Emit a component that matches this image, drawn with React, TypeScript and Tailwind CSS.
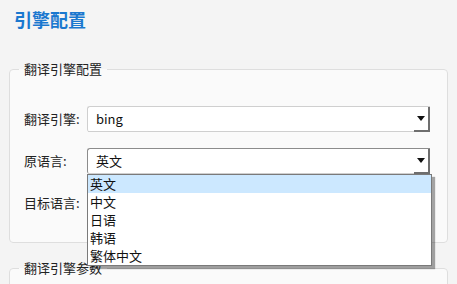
import React from "react";

const font = { fontFamily: '"Noto Sans CJK SC", "Noto Sans", sans-serif' };

function Arrow() {
  return (
    <svg width="8" height="5" viewBox="0 0 8 5">
      <polygon points="0,0 8,0 4,5" fill="#111" />
    </svg>
  );
}

function SelectBox({ value, focused }: { value: string; focused?: boolean }) {
  return (
    <div
      className={`flex h-[26px] w-[343px] items-stretch rounded-l-[3px] border-t border-l bg-white ${
        focused ? "border-[#8c8c8c]" : "border-[#cfcfcf]"
      }`}
    >
      <div className="flex flex-1 items-center border-b border-[#cfcfcf] pl-[8px] text-[13px] text-[#111]">
        {value}
      </div>
      <div className="flex w-[16px] items-center justify-center border-r-2 border-b-2 border-[#6e6e6e] pr-[1px]">
        <Arrow />
      </div>
    </div>
  );
}

export default function App() {
  const options = ["英文", "中文", "日语", "韩语", "繁体中文"];
  return (
    <div className="relative h-[284px] w-[457px] overflow-hidden bg-[#f4f4f4]" style={font}>
      <h1 className="pl-[14px] pt-[7px] text-[18px] font-bold leading-[24px] text-[#1a78cf]">引擎配置</h1>

      <fieldset className="mx-[9px] mt-[29px] rounded-[4px] border border-[#dedede] bg-[#fafafa] pb-[26px] pl-[14px] pr-[16px] pt-[28px]">
        <legend className="-ml-[5px] px-[5px] text-[13px] leading-[18px] text-[#222]">翻译引擎配置</legend>
        <div className="flex flex-col gap-[16px]">
          <div className="flex items-center">
            <span className="w-[63px] text-[13px] text-[#222]">翻译引擎:</span>
            <SelectBox value="bing" />
          </div>
          <div className="relative flex items-center">
            <span className="w-[63px] text-[13px] text-[#222]">原语言:</span>
            <SelectBox value="英文" focused />
            <div className="absolute left-[63px] top-[26px] z-10 w-[345px] border border-[#7a7a7a] bg-white shadow-[3px_3px_1px_rgba(0,0,0,0.35)]">
              {options.map((o, i) => (
                <div
                  key={o}
                  className={`h-[18px] pl-[2px] text-[13px] leading-[18px] text-[#111] ${i === 0 ? "bg-[#cce8ff]" : ""}`}
                >
                  {o}
                </div>
              ))}
            </div>
          </div>
          <div className="flex items-center">
            <span className="w-[63px] text-[13px] text-[#222]">目标语言:</span>
            <SelectBox value="" />
          </div>
        </div>
      </fieldset>

      <fieldset className="mx-[9px] mt-[16px] h-[60px] rounded-[4px] border border-[#dedede] bg-[#fafafa] pl-[14px]">
        <legend className="-ml-[5px] px-[5px] text-[13px] leading-[18px] text-[#222]">翻译引擎参数</legend>
      </fieldset>
    </div>
  );
}
